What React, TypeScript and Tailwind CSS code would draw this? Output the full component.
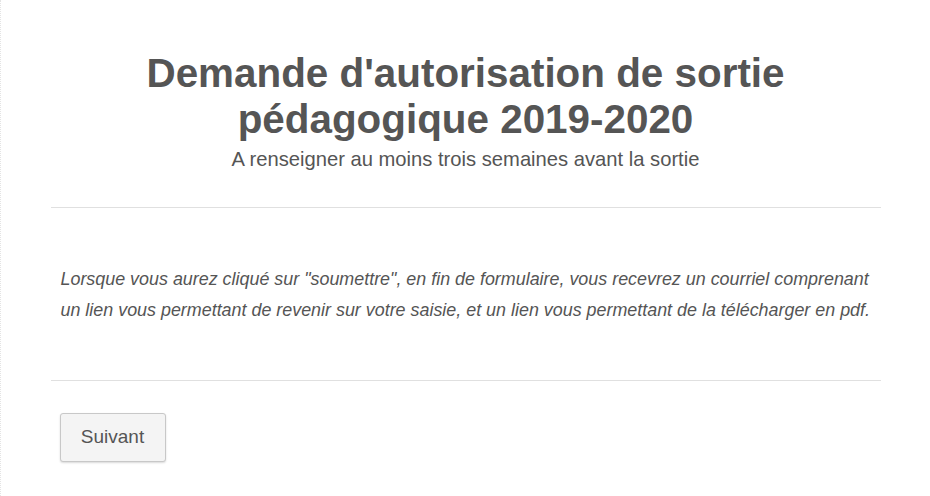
export default function App() {
  return (
    <div
      className="min-h-[496px] bg-white border-l border-dotted border-[#e4e4e4] text-[#555]"
      style={{ fontFamily: '"Liberation Sans", Arial, sans-serif' }}
    >
      <div className="mx-auto w-[830px] pt-[50px]">
        {/* Header */}
        <div className="text-center pb-[35px] border-b border-[#e0e0e0]">
          <h1 className="text-[40.4px] leading-[46px] font-bold px-[60px]">
            Demande d'autorisation de sortie pédagogique 2019-2020
          </h1>
          <p className="text-[20.2px] leading-[26px] mt-[4px]">
            A renseigner au moins trois semaines avant la sortie
          </p>
        </div>

        {/* Intro text */}
        <div className="pl-[10px] pr-[2px] pt-[56px] pb-[54px] border-b border-[#e0e0e0]">
          <p className="italic text-[17.9px] leading-[31px]">
            Lorsque vous aurez cliqué sur "soumettre", en fin de formulaire, vous recevrez un courriel comprenant un
            lien vous permettant de revenir sur votre saisie, et un lien vous permettant de la télécharger en pdf.
          </p>
        </div>

        {/* Buttons */}
        <div className="px-[9px] pt-[32px]">
          <button className="h-[49px] w-[106px] rounded-[3px] border border-[#c8c8c8] bg-[#f4f4f4] text-[19px] text-[#555] shadow-[0_1px_2px_rgba(0,0,0,0.15)]">
            Suivant
          </button>
        </div>
      </div>
    </div>
  )
}
